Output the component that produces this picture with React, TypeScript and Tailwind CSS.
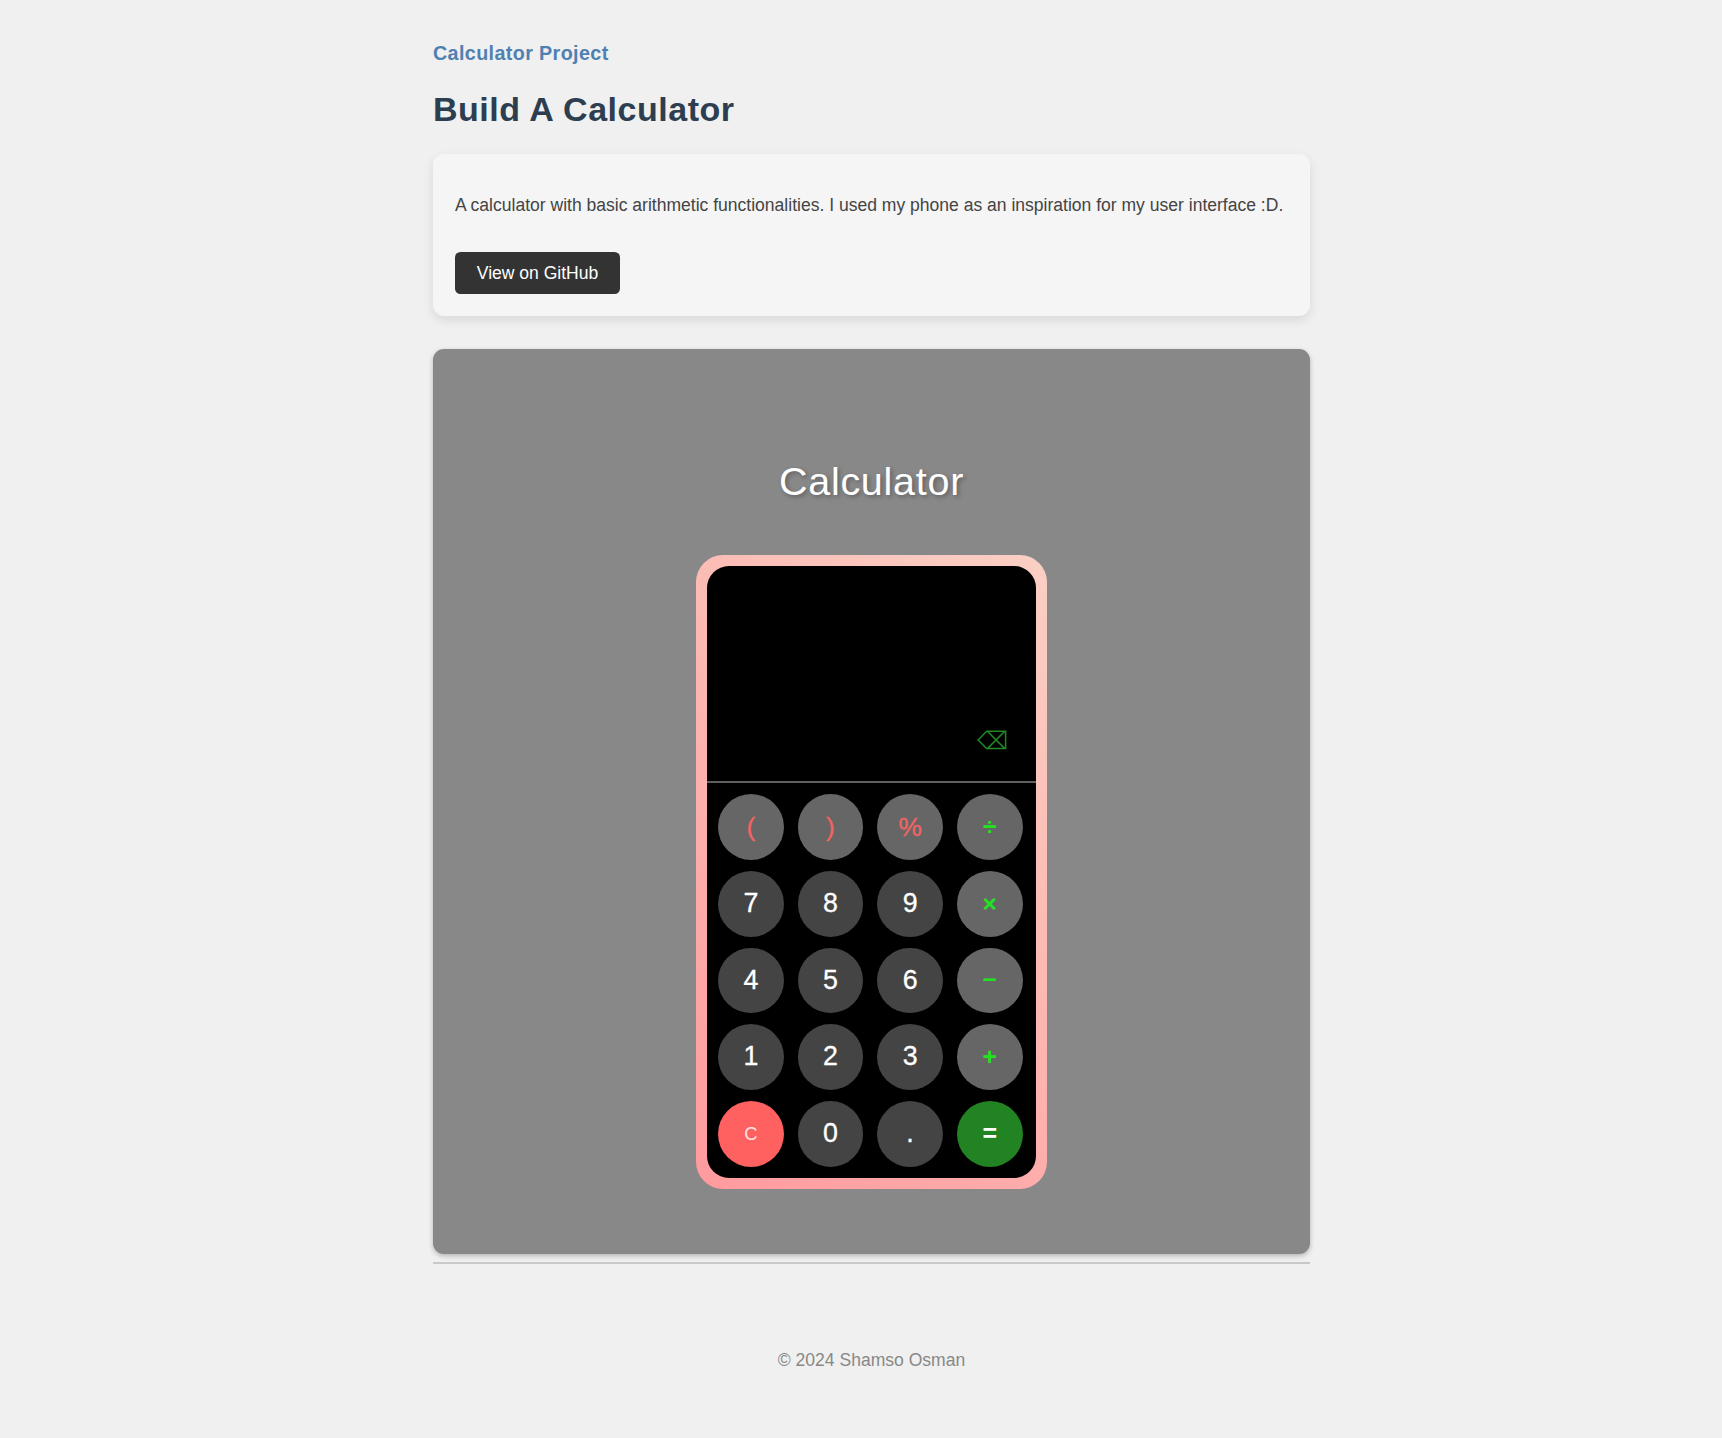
type Kind = "digit" | "symbol" | "operator" | "clear" | "equals";

const keys: { label: string; kind: Kind }[] = [
  { label: "(", kind: "symbol" },
  { label: ")", kind: "symbol" },
  { label: "%", kind: "symbol" },
  { label: "÷", kind: "operator" },
  { label: "7", kind: "digit" },
  { label: "8", kind: "digit" },
  { label: "9", kind: "digit" },
  { label: "×", kind: "operator" },
  { label: "4", kind: "digit" },
  { label: "5", kind: "digit" },
  { label: "6", kind: "digit" },
  { label: "−", kind: "operator" },
  { label: "1", kind: "digit" },
  { label: "2", kind: "digit" },
  { label: "3", kind: "digit" },
  { label: "+", kind: "operator" },
  { label: "C", kind: "clear" },
  { label: "0", kind: "digit" },
  { label: ".", kind: "digit" },
  { label: "=", kind: "equals" },
];

const keyStyles: Record<Kind, string> = {
  digit: "bg-[#444] text-white text-[26.8px] pb-px [-webkit-text-stroke:0.3px_#fff]",
  symbol: "bg-[#666] text-[#f06464] text-[26.3px] pb-px [-webkit-text-stroke:0.3px_#f06464]",
  operator: "bg-[#666] text-[#1fe51f] text-[24.5px] font-bold",
  clear: "bg-[#ff6060] text-[#ffe4e4] text-[18.4px]",
  equals: "bg-[#228322] text-white text-[25px] font-bold pb-px",
};

function Calculator() {
  return (
    <div className="mx-auto mt-[51.5px] w-[351px] rounded-[27px] bg-[linear-gradient(45deg,#ff9a9e_0%,#fad0c4_100%)] p-[11px]">
      <div className="h-[612.5px] overflow-hidden rounded-[22px] bg-black">
        <div className="flex h-[217.5px] items-end justify-end border-b-2 border-[#606060] pr-[29.5px] pb-[31.5px]">
          <button aria-label="Delete">
            <svg
              className="block h-[20px] w-[30px]"
              viewBox="0 0 30 20"
              fill="none"
              stroke="#208a22"
              strokeWidth="1.5"
            >
              <path d="M9.6 1.2H28.6V18.6H9.6L1.2 9.9Z M10.4 1.2L27.8 18.6M27.8 1.2L10.4 18.6" />
            </svg>
          </button>
        </div>
        <div className="grid grid-cols-[repeat(4,65.8px)] gap-x-[13.8px] gap-y-[10.9px] pt-[11.3px] pl-[11px]">
          {keys.map((key) => (
            <button
              key={key.label}
              className={`flex h-[65.8px] w-[65.8px] items-center justify-center rounded-full leading-none ${keyStyles[key.kind]}`}
            >
              {key.label}
            </button>
          ))}
        </div>
      </div>
    </div>
  );
}

export default function App() {
  return (
    <div className="min-h-[1438px] bg-[#f0f0f0] pt-[42px] font-['Liberation_Sans',Arial,sans-serif]">
      <main className="ml-[433px] w-[877px]">
        <h2 className="text-[19.73px] leading-[22px] font-bold tracking-[0.38px] text-[#4f81b0]">
          Calculator Project
        </h2>
        <h1 className="mt-[26px] text-[34px] leading-[38px] font-bold tracking-[0.52px] text-[#2c3e50]">
          Build A Calculator
        </h1>

        <section className="mt-[25.5px] h-[162.5px] rounded-[11px] bg-[#f5f5f5] px-[22px] pt-[38.5px] shadow-[0_4px_11px_rgba(0,0,0,0.1)]">
          <p className="text-[17.54px] leading-[26px] whitespace-nowrap text-[#444]">
            A calculator with basic arithmetic functionalities. I used my phone as an inspiration for my user
            interface :D.
          </p>
          <a className="mt-[34px] flex h-[42px] w-[165px] items-center justify-center rounded-[5.5px] bg-[#333] text-[17.54px] leading-[20px] text-white">
            View on GitHub
          </a>
        </section>

        <section className="mt-[33px] h-[904.5px] rounded-[11px] bg-[#888] pt-[110px] shadow-[0_2px_5.5px_rgba(0,0,0,0.25)]">
          <h3 className="text-center text-[39.5px] leading-[44px] tracking-[0.73px] text-white [text-shadow:2px_2px_4px_rgba(0,0,0,0.3)]">
            Calculator
          </h3>
          <Calculator />
        </section>

        <hr className="mt-[8.5px] border-t-2 border-[#c9c9c9]" />

        <footer className="mt-[86px] text-center text-[17.54px] leading-[20px] text-[#888]">
          © 2024 Shamso Osman
        </footer>
      </main>
    </div>
  );
}
